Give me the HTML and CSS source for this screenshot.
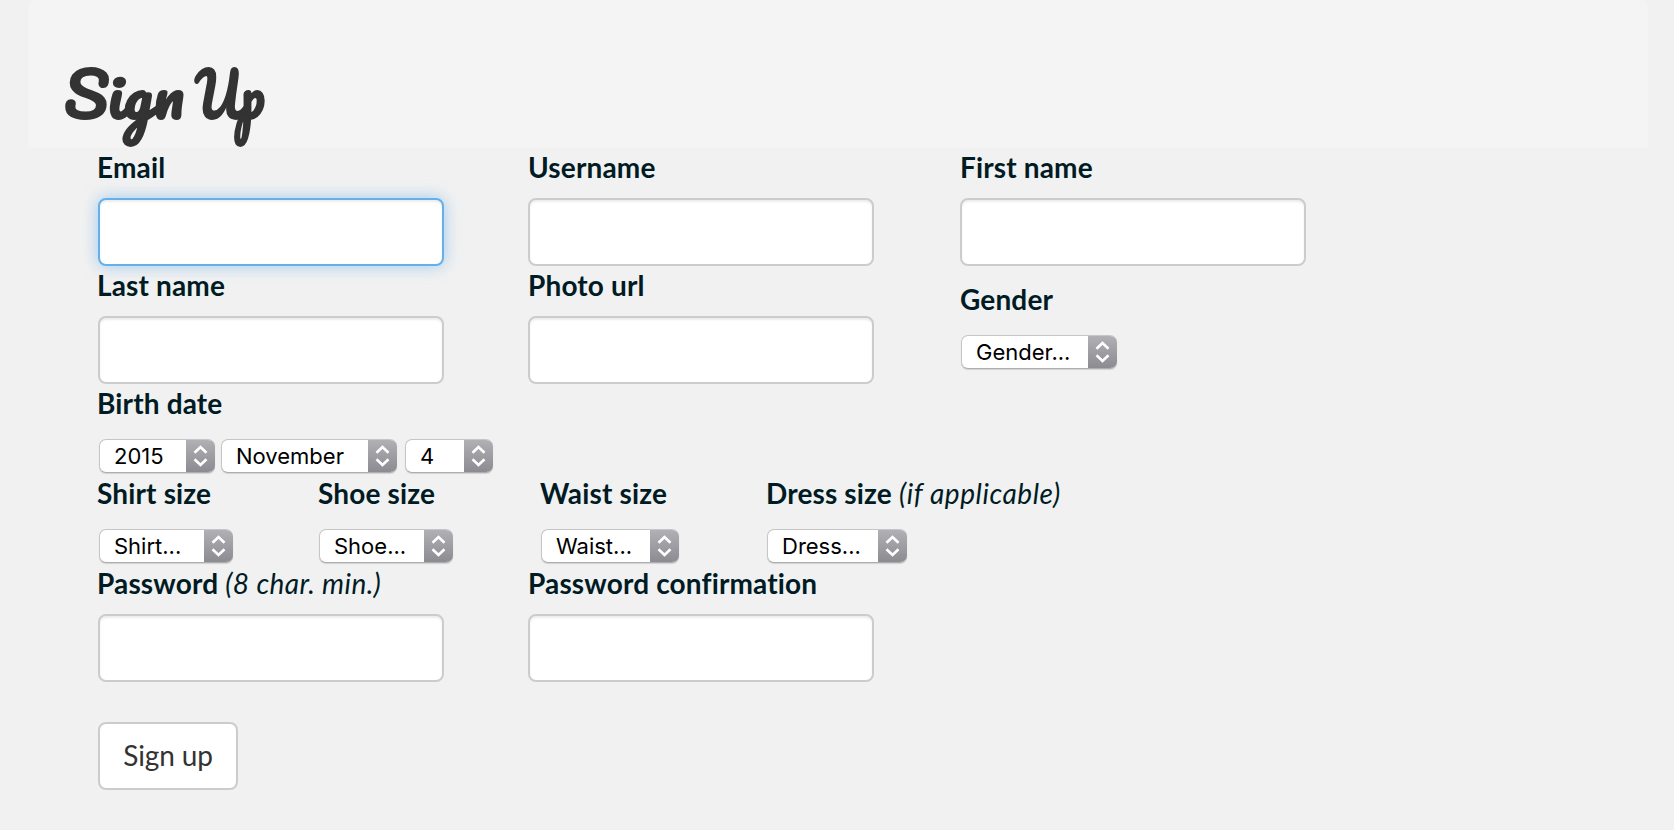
FILE: index.html
```html
<!DOCTYPE html>
<html lang="en">
<head>
<meta charset="utf-8">
<title>Sign Up</title>
<link rel="stylesheet" href="styles.css">
</head>
<body>
<svg class="defs" aria-hidden="true"><symbol id="arrows" viewBox="0 0 29 34"><path d="M8.5 13.8 14.5 8 20.5 13.8M8.5 20.2 14.5 26 20.5 20.2" fill="none" stroke="#fff" stroke-width="2.6" stroke-linecap="butt" stroke-linejoin="miter"/></symbol></svg>
<div class="container">
  <header class="header"><h1 class="title"><span class="word wide">Sign</span> <span class="word narrow">Up</span></h1></header>
  <form class="form">
    <div class="row">
      <label class="field"><span class="label">Email</span><input class="input active" type="email"></label>
      <label class="field"><span class="label">Username</span><input class="input" type="text"></label>
      <label class="field"><span class="label">First name</span><input class="input" type="text"></label>
    </div>
    <div class="row">
      <label class="field"><span class="label">Last name</span><input class="input" type="text"></label>
      <label class="field"><span class="label">Photo url</span><input class="input" type="text"></label>
      <label class="field gender"><span class="label">Gender</span><span class="select w-gender"><select><option>Gender...</option></select><svg class="arrows"><use href="#arrows"/></svg></span></label>
    </div>
    <div class="field birth">
      <span class="label">Birth date</span>
      <div class="dates">
        <span class="select w-year"><select><option>2015</option></select><svg class="arrows"><use href="#arrows"/></svg></span>
        <span class="select w-month"><select><option>November</option></select><svg class="arrows"><use href="#arrows"/></svg></span>
        <span class="select w-day"><select><option>4</option></select><svg class="arrows"><use href="#arrows"/></svg></span>
      </div>
    </div>
    <div class="row sizes">
      <label class="field"><span class="label">Shirt size</span><span class="select w-shirt"><select><option>Shirt...</option></select><svg class="arrows"><use href="#arrows"/></svg></span></label>
      <label class="field"><span class="label">Shoe size</span><span class="select w-shirt"><select><option>Shoe...</option></select><svg class="arrows"><use href="#arrows"/></svg></span></label>
      <label class="field"><span class="label">Waist size</span><span class="select w-waist"><select><option>Waist...</option></select><svg class="arrows"><use href="#arrows"/></svg></span></label>
      <label class="field"><span class="label">Dress size <em>(if applicable)</em></span><span class="select w-dress"><select><option>Dress...</option></select><svg class="arrows"><use href="#arrows"/></svg></span></label>
    </div>
    <div class="row">
      <label class="field"><span class="label">Password <em class="hint">(8 char. min.)</em></span><input class="input" type="password"></label>
      <label class="field"><span class="label">Password confirmation</span><input class="input" type="password"></label>
    </div>
    <button class="submit" type="button">Sign up</button>
  </form>
</div>
</body>
</html>
```
FILE: styles.css
```css
* { box-sizing: border-box; }
body {
  margin: 0;
  background: #f1f1f1;
  color: #001b24;
  font: 28px/40px Lato, "Open Sans", sans-serif;
}
.defs { display: none; }
.container { width: 1620px; margin-left: 28px; }
.header {
  height: 148px;
  padding: 54px 0 0 36px;
  background: #f4f4f4;
  border-radius: 8px 8px 0 0;
}
.title {
  display: flex;
  gap: 18px;
  margin: 0;
  color: #333;
  font: 400 60px/80px Pacifico, cursive;
  -webkit-text-stroke: 1.8px #333;
}
.word { transform-origin: left center; }
.wide { transform: scaleX(1.06); }
.narrow { transform: scaleX(.86); }
.form { padding-left: 70px; }
.row { display: grid; grid-template-columns: 430px 432px 346px; }
.row.sizes { grid-template-columns: 220px 222px 226px 400px; height: 90px; }
.field { display: block; }
.gender { padding-top: 14px; }
.birth { height: 90px; }
.label {
  display: block;
  height: 40px;
  margin-bottom: 10px;
  line-height: 38px;
  font-weight: 700;
  font-variant-ligatures: none;
  letter-spacing: .15px;
  white-space: nowrap;
}
.field:first-child > .label, .birth > .label { margin-left: -1px; }
.label em { font-weight: 400; letter-spacing: .55px; }
.label .hint { letter-spacing: .4px; }
.input {
  display: block;
  width: 346px;
  height: 68px;
  padding: 12px 24px;
  border: 2px solid #ccc;
  border-radius: 8px;
  outline: 0;
  background: #fff;
  box-shadow: inset 0 2px 2px rgba(0, 0, 0, .075);
  font: inherit;
}
.input.active {
  border-color: #66afe9;
  box-shadow: inset 0 2px 2px rgba(0, 0, 0, .075), 0 0 16px rgba(102, 175, 233, .6);
}
.select {
  display: flex;
  height: 34px;
  margin: 15px 0 0 1px;
  border-radius: 7px;
  overflow: hidden;
  background: #fff;
  border: 1px solid #c6c6c6;
  border-bottom-color: #adadad;
  border-right: 0;
  box-shadow: 0 1px 1px rgba(0, 0, 0, .13);
}
.select select {
  flex: 1;
  min-width: 0;
  padding: 0 0 0 14px;
  border: 0;
  outline: 0;
  appearance: none;
  background: transparent;
  color: #000;
  font: 22px/32px Inter, "Open Sans", sans-serif;
}
.arrows {
  flex: none;
  width: 29px;
  height: 34px;
  margin: -1px 0;
  background: linear-gradient(#b2b1b6, #8b8a90);
}
.dates { display: flex; }
.dates .select { margin-top: 5px; }
.w-year { width: 116px; }
.w-month { width: 176px; margin-left: 6px; }
.w-day { width: 88px; margin-left: 8px; }
.w-gender { width: 156px; }
.w-shirt { width: 134px; }
.w-waist { width: 138px; }
.w-dress { width: 140px; }
.submit {
  display: block;
  width: 140px;
  height: 68px;
  margin-top: 40px;
  padding: 0 0 2px;
  border: 2px solid #ccc;
  border-radius: 8px;
  background: #fff;
  color: #333;
  font: 28px/40px Lato, "Open Sans", sans-serif;
  letter-spacing: -.15px;
}
```
